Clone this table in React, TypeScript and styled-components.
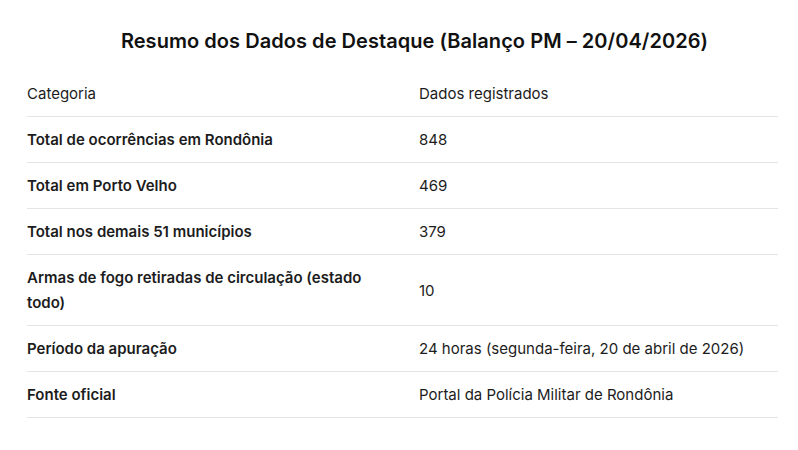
import React from "react";
import styled, { createGlobalStyle } from "styled-components";

const Global = createGlobalStyle`
  html, body { margin: 0; padding: 0; background: #ffffff; }
  body { font-family: Inter, "Noto Sans", sans-serif; color: #1f1f1f; }
`;

const Page = styled.div`
  width: 798px;
  padding: 27px 20px 0 27px;
  box-sizing: border-box;
`;

const Title = styled.h2`
  margin: 0 0 16px 0;
  padding-left: 24px;
  font-size: 20px;
  line-height: 28px;
  font-weight: 600;
  text-align: center;
  color: #111111;
  letter-spacing: 0.05px;
`;

const Table = styled.div`
  width: 751px;
  display: grid;
  grid-template-columns: 392px 1fr;
`;

const Cell = styled.div<{ $bold?: boolean }>`
  padding: 10px 24px 10px 0;
  border-bottom: 1px solid #e4e4e4;
  font-size: 15px;
  line-height: 25px;
  font-weight: ${(p) => (p.$bold ? 600 : 400)};
  color: #1c1c1c;
  display: flex;
  align-items: center;
`;

const rows: [string, string][] = [
  ["Total de ocorrências em Rondônia", "848"],
  ["Total em Porto Velho", "469"],
  ["Total nos demais 51 municípios", "379"],
  ["Armas de fogo retiradas de circulação (estado todo)", "10"],
  ["Período da apuração", "24 horas (segunda-feira, 20 de abril de 2026)"],
  ["Fonte oficial", "Portal da Polícia Militar de Rondônia"],
];

export default function App() {
  return (
    <Page>
      <Global />
      <Title>Resumo dos Dados de Destaque (Balanço PM – 20/04/2026)</Title>
      <Table>
        <Cell>Categoria</Cell>
        <Cell>Dados registrados</Cell>
        {rows.map(([k, v]) => (
          <React.Fragment key={k}>
            <Cell $bold>{k}</Cell>
            <Cell>{v}</Cell>
          </React.Fragment>
        ))}
      </Table>
    </Page>
  );
}
